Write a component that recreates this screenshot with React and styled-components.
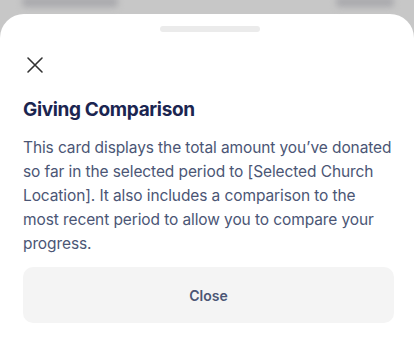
import styled, { createGlobalStyle } from "styled-components";

const GlobalStyle = createGlobalStyle`
  html, body {
    margin: 0;
    padding: 0;
    background: #c7c7c7;
    font-family: Inter, "Noto Sans", sans-serif;
    -webkit-font-smoothing: antialiased;
  }
`;

const lines = [
  "This card displays the total amount you’ve donated",
  "so far in the selected period to [Selected Church",
  "Location]. It also includes a comparison to the",
  "most recent period to allow you to compare your",
  "progress.",
];

export default function App() {
  return (
    <>
      <GlobalStyle />
      <Backdrop>
        <Peek>
          <Blurred width="96px" />
          <Blurred width="58px" />
        </Peek>
        <Sheet>
          <Handle />
          <CloseIcon aria-label="Close">
            <svg width="18" height="18" viewBox="0 0 18 18" fill="none">
              <path d="M2 2L16 16M16 2L2 16" stroke="#333" strokeWidth="1.6" strokeLinecap="round" />
            </svg>
          </CloseIcon>
          <Title>Giving Comparison</Title>
          <Body>
            {lines.map((l) => (
              <Line key={l}>{l}</Line>
            ))}
          </Body>
          <Button>Close</Button>
        </Sheet>
      </Backdrop>
    </>
  );
}

const Backdrop = styled.div`
  display: flex;
  flex-direction: column;
  height: 358px;
  overflow: hidden;
`;

const Peek = styled.div`
  display: flex;
  justify-content: space-between;
  height: 14px;
  padding: 0 20px 0 22px;
`;

const Blurred = styled.div`
  width: ${(p) => p.width};
  height: 10px;
  margin-top: -3px;
  border-radius: 4px;
  background: #a9a9ad;
  filter: blur(3px);
`;

const Sheet = styled.div`
  flex: 1;
  display: flex;
  flex-direction: column;
  background: #fff;
  border-radius: 24px 24px 0 0;
  padding: 12px 20px 0 23px;
`;

const Handle = styled.div`
  align-self: center;
  width: 100px;
  height: 6px;
  margin-left: 3px;
  border-radius: 3px;
  background: #ebebeb;
`;

const CloseIcon = styled.div`
  display: flex;
  width: 18px;
  height: 18px;
  margin: 24px 0 0 3px;
`;

const Title = styled.h2`
  margin: 22px 0 0;
  font-size: 19px;
  line-height: 28px;
  font-weight: 700;
  color: #1b2550;
  letter-spacing: -0.35px;
`;

const Body = styled.div`
  display: flex;
  flex-direction: column;
  margin-top: 12px;
  font-size: 15.5px;
  line-height: 24px;
  letter-spacing: -0.1px;
  color: #4b5675;
`;

const Line = styled.span`
  white-space: nowrap;
`;

const Button = styled.div`
  display: flex;
  align-items: center;
  justify-content: center;
  height: 56px;
  margin-top: 11px;
  border-radius: 10px;
  background: #f4f4f4;
  font-size: 14px;
  font-weight: 600;
  color: #4b5675;
`;
